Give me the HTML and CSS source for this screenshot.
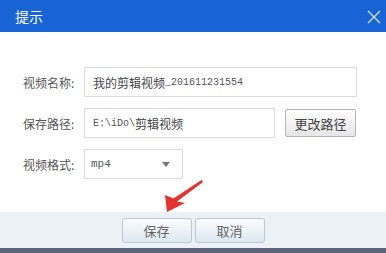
FILE: index.html
```html
<!DOCTYPE html>
<html lang="zh-CN">
<head>
  <meta charset="UTF-8" />
  <title>提示</title>
  <link rel="stylesheet" href="styles.css">
</head>
<body>
  <div class="dialog">
    <div class="titlebar">
      <span class="title">提示</span>
      <svg class="close" width="14" height="14" viewBox="0 0 14 14">
        <path d="M1 1 L13 13 M13 1 L1 13" stroke="#d6e4fa" stroke-width="1.3" fill="none" />
      </svg>
    </div>

    <div class="content">
      <div class="row">
        <label class="label">视频名称:</label>
        <div class="field field-name">我的剪辑视频<span class="lat">_201611231554</span></div>
      </div>
      <div class="row">
        <label class="label">保存路径:</label>
        <div class="field field-path"><span class="lat">E:\iDo\</span>剪辑视频</div>
        <button class="btn-change">更改路径</button>
      </div>
      <div class="row">
        <label class="label">视频格式:</label>
        <div class="field field-select">
          <span class="lat mono">mp4</span>
          <span class="caret"></span>
        </div>
      </div>
    </div>

    <div class="footer">
      <button class="btn-foot">保存</button>
      <button class="btn-foot">取消</button>
    </div>
    <div class="bottombar"></div>

    <!-- flecha roja de anotación -->
    <svg class="arrow" width="50" height="42" viewBox="0 0 50 42">
      <polygon points="7,36 25,27 17,25.5 43,6 41.5,4 13.5,22.5 5,19" fill="#e8302c" />
    </svg>
  </div>
</body>
</html>
```

FILE: styles.css
```css
body {
  margin: 0;
  padding: 0;
  font-family: "Noto Sans CJK SC", "Noto Sans", sans-serif;
  background: #ffffff;
}

.dialog {
  position: relative;
  width: 386px;
  height: 253px;
  overflow: hidden;
}

.titlebar {
  height: 32px;
  background-color: #1864d6;
  display: flex;
  align-items: center;
  justify-content: space-between;
  padding: 0 5px 0 15px;
}

.title {
  color: #ffffff;
  font-size: 14px;
  line-height: 32px;
}

.close {
  margin-top: 1px;
}

.content {
  height: 180px;
  box-sizing: border-box;
  padding: 35px 0 0 23px;
  display: flex;
  flex-direction: column;
  gap: 11px;
}

.row {
  display: flex;
  align-items: center;
  height: 30px;
}

.label {
  width: 61px;
  font-size: 12px;
  color: #555;
  white-space: nowrap;
}

.field {
  box-sizing: border-box;
  height: 30px;
  border: 1px solid #dcdcdc;
  padding-left: 8px;
  font-size: 12px;
  color: #444;
  display: flex;
  align-items: center;
  white-space: nowrap;
}

.lat {
  font-family: "Liberation Mono", monospace;
  font-size: 10px;
  color: #555;
}

.mono {
  font-size: 11px;
}

.field-name {
  width: 273px;
}

.field-path {
  width: 191px;
}

.field-select {
  width: 99px;
  padding-left: 6px;
  justify-content: space-between;
  padding-right: 12px;
}

.caret {
  width: 0;
  height: 0;
  border-left: 4px solid transparent;
  border-right: 4px solid transparent;
  border-top: 5px solid #777;
}

.btn-change {
  margin-left: 10px;
  width: 71px;
  height: 28px;
  border: 1px solid #b4b4b4;
  border-radius: 2px;
  background: linear-gradient(#ffffff, #e6e6e6);
  font-family: "Noto Sans CJK SC", sans-serif;
  font-size: 13px;
  color: #444;
  padding: 0;
  cursor: pointer;
}

.footer {
  height: 36px;
  background-color: #ecf1f5;
  display: flex;
  justify-content: center;
  align-items: center;
  gap: 3px;
}

.btn-foot {
  width: 70px;
  height: 25px;
  border: 1px solid #b9c9d8;
  border-radius: 3px;
  background: linear-gradient(#fafcfe, #dde8f1);
  font-family: "Noto Sans CJK SC", sans-serif;
  font-size: 13px;
  color: #666;
  padding: 0;
  cursor: pointer;
}

.bottombar {
  height: 5px;
  background-color: #5b6479;
}

.arrow {
  position: absolute;
  left: 160px;
  top: 176px;
}
```
